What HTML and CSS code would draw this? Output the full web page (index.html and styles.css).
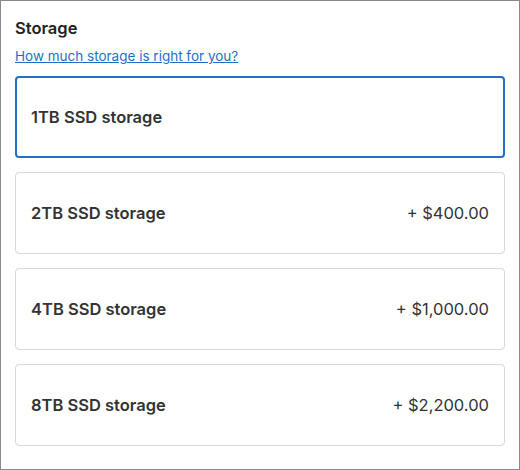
FILE: index.html
```html
<!DOCTYPE html>
<html>
<head>
<meta charset="utf-8">
<link rel="stylesheet" href="styles.css">
</head>
<body>
<div class="frame">
  <h2 class="title">Storage</h2>
  <a class="help" href="#">How much storage is right for you?</a>
  <div class="options">
    <div class="option selected"><span class="name">1TB SSD storage</span></div>
    <div class="option"><span class="name">2TB SSD storage</span><span class="price">+ $400.00</span></div>
    <div class="option"><span class="name">4TB SSD storage</span><span class="price">+ $1,000.00</span></div>
    <div class="option"><span class="name">8TB SSD storage</span><span class="price">+ $2,200.00</span></div>
  </div>
</div>
</body>
</html>
```
FILE: styles.css
```css
html, body {
  margin: 0;
  padding: 0;
  background: #fff;
}
body {
  font-family: Inter, "Noto Sans", sans-serif;
  color: #333;
}
.frame {
  box-sizing: border-box;
  width: 520px;
  height: 470px;
  border: 1px solid #8a8a8a;
  padding: 17px 14px 0 14px;
  display: flex;
  flex-direction: column;
}
.title {
  margin: 0;
  font-size: 16.5px;
  line-height: 20px;
  font-weight: 600;
  color: #222;
}
.help {
  margin-top: 10px;
  font-size: 13.5px;
  line-height: 16px;
  color: #1f6fc9;
  text-decoration: underline;
  align-self: flex-start;
}
.options {
  margin-top: 12px;
  display: flex;
  flex-direction: column;
  gap: 14px;
}
.option {
  box-sizing: border-box;
  height: 82px;
  border: 1px solid #d8d8d8;
  border-radius: 4px;
  padding: 0 15px;
  display: flex;
  align-items: center;
  justify-content: space-between;
  font-size: 16.5px;
}
.option.selected {
  border: 2px solid #2171c8;
  padding: 0 14px;
}
.name {
  font-weight: 600;
  color: #333;
}
.price {
  font-weight: 400;
  color: #333;
}
```
